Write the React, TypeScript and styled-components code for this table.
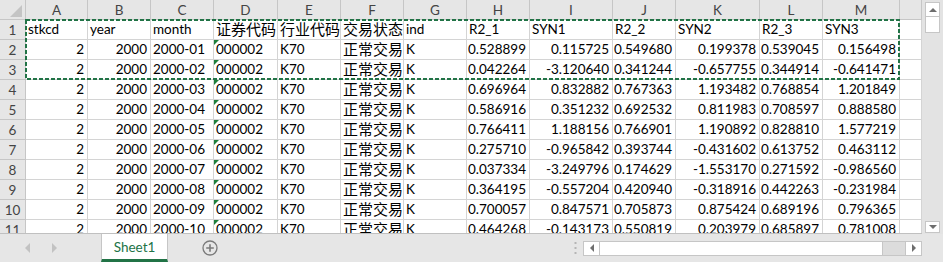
import React from "react";
import styled, { createGlobalStyle } from "styled-components";

const GlobalStyle = createGlobalStyle`
  html, body {
    margin: 0;
    padding: 0;
    background: #ffffff;
  }
  body {
    font-family: Lato, "Noto Sans CJK SC", sans-serif;
  }
`;

const GREEN = "#217346";
const GRID_LINE = "#d4d4d4";
const HEAD_LINE = "#c6c6c6";
const HEAD_BG = "#e6e6e6";

const COLS = [62, 63, 63, 64, 63, 63, 63, 63, 83, 63, 84, 63, 77, 22];
const LETTERS = ["A", "B", "C", "D", "E", "F", "G", "H", "I", "J", "K", "L", "M", ""];
// r = right aligned number, l = left aligned text
const ALIGN = ["r", "r", "l", "l", "l", "l", "l", "r", "r", "r", "r", "r", "r", "l"];

const HEADER = ["stkcd", "year", "month", "证券代码", "行业代码", "交易状态", "ind", "R2_1", "SYN1", "R2_2", "SYN2", "R2_3", "SYN3"];

const VALUES: string[][] = [
  ["0.528899", "0.115725", "0.549680", "0.199378", "0.539045", "0.156498"],
  ["0.042264", "-3.120640", "0.341244", "-0.657755", "0.344914", "-0.641471"],
  ["0.696964", "0.832882", "0.767363", "1.193482", "0.768854", "1.201849"],
  ["0.586916", "0.351232", "0.692532", "0.811983", "0.708597", "0.888580"],
  ["0.766411", "1.188156", "0.766901", "1.190892", "0.828810", "1.577219"],
  ["0.275710", "-0.965842", "0.393744", "-0.431602", "0.613752", "0.463112"],
  ["0.037334", "-3.249796", "0.174629", "-1.553170", "0.271592", "-0.986560"],
  ["0.364195", "-0.557204", "0.420940", "-0.318916", "0.442263", "-0.231984"],
  ["0.700057", "0.847571", "0.705873", "0.875424", "0.689196", "0.796365"],
  ["0.464268", "-0.143173", "0.550819", "0.203979", "0.685897", "0.781008"],
];

const rows: string[][] = [
  [...HEADER, ""],
  ...VALUES.map((v, i) => [
    "2",
    "2000",
    `2000-${String(i + 1).padStart(2, "0")}`,
    "000002",
    "K70",
    "正常交易",
    "K",
    ...v,
    "",
  ]),
];

const hasCjk = (s: string) => /[\u4e00-\u9fff]/.test(s);

const Window = styled.div`
  width: 943px;
  height: 262px;
  display: flex;
  flex-direction: column;
  overflow: hidden;
  background: #ffffff;
`;

const GridArea = styled.div`
  display: flex;
  height: 234px;
  flex-shrink: 0;
`;

const Sheet = styled.div<{ $template: string }>`
  position: relative;
  width: 922px;
  height: 234px;
  overflow: hidden;
  display: grid;
  grid-template-columns: ${(p) => p.$template};
  grid-auto-rows: 20px;
  align-content: start;
  border-bottom: 1px solid #c0c0c0;
  box-sizing: border-box;
`;

const Corner = styled.div`
  background: ${HEAD_BG};
  border-right: 1px solid ${HEAD_LINE};
  border-bottom: 1px solid ${HEAD_LINE};
  box-sizing: border-box;
  display: flex;
  align-items: flex-end;
  justify-content: flex-end;
  padding: 0 3px 2px 0;
`;

const ColHead = styled.div`
  background: ${HEAD_BG};
  border-right: 1px solid ${HEAD_LINE};
  border-bottom: 1px solid ${HEAD_LINE};
  box-sizing: border-box;
  display: flex;
  align-items: center;
  justify-content: center;
  font-size: 13.5px;
  color: #444444;
`;

const RowHead = styled(ColHead)`
  font-size: 13.5px;
`;

const Cell = styled.div<{ $align: string; $cjk: boolean; $flag: boolean }>`
  position: relative;
  border-right: 1px solid ${GRID_LINE};
  border-bottom: 1px solid ${GRID_LINE};
  box-sizing: border-box;
  display: flex;
  align-items: flex-end;
  justify-content: ${(p) => (p.$align === "r" ? "flex-end" : "flex-start")};
  padding: 0 3px 1px 2px;
  white-space: nowrap;
  color: #000000;
  font-family: ${(p) => (p.$cjk ? `"Noto Sans CJK SC", sans-serif` : `Lato, sans-serif`)};
  font-size: ${(p) => (p.$cjk ? "15px" : "13.5px")};
  line-height: ${(p) => (p.$cjk ? "18px" : "17px")};

  &::before {
    content: "";
    display: ${(p) => (p.$flag ? "block" : "none")};
    position: absolute;
    left: 0;
    top: 0;
    width: 0;
    height: 0;
    border-top: 5px solid #1e7f3c;
    border-right: 5px solid transparent;
  }
`;

const Marquee = styled.svg`
  position: absolute;
  left: 25px;
  top: 19px;
  width: 875px;
  height: 61px;
  pointer-events: none;
`;

const VScroll = styled.div`
  width: 21px;
  height: 234px;
  background: #e3e3e3;
  box-sizing: border-box;
  padding: 2px 3px 1px 3px;
  display: flex;
  flex-direction: column;
`;

const ScrollButton = styled.div<{ $h: number }>`
  height: ${(p) => p.$h}px;
  background: #ffffff;
  border: 1px solid #c6c6c6;
  box-sizing: border-box;
  display: flex;
  align-items: center;
  justify-content: center;
`;

const VThumb = styled.div`
  height: 16px;
  background: #ffffff;
  border: 1px solid #c6c6c6;
  border-top: none;
  box-sizing: border-box;
`;

const Spacer = styled.div`
  flex: 1;
`;

const BottomBar = styled.div`
  height: 28px;
  background: #e6e6e6;
  display: flex;
  align-items: stretch;
`;

const NavArea = styled.div`
  width: 101px;
  display: flex;
  align-items: center;
  padding-left: 25px;
  gap: 22px;
  box-sizing: border-box;
`;

const Tab = styled.div`
  width: 67px;
  background: #ffffff;
  border-left: 1px solid #c6c6c6;
  border-right: 1px solid #c6c6c6;
  border-bottom: 3px solid ${GREEN};
  box-sizing: border-box;
  margin-top: -1px;
  display: flex;
  align-items: center;
  justify-content: center;
  padding-top: 1px;
  font-family: Lato, sans-serif;
  font-size: 13.5px;
  color: ${GREEN};
`;

const AddArea = styled.div`
  margin-left: 34px;
  display: flex;
  align-items: center;
`;

const Dots = styled.div`
  margin-left: auto;
  width: 16px;
  display: flex;
  align-items: center;
  justify-content: center;
`;

const HScroll = styled.div`
  width: 339px;
  display: flex;
  align-items: center;
  margin-left: 0;
`;

const HTrack = styled.div`
  flex: 1;
  height: 15px;
  display: flex;
  background: #dcdcdc;
  border: 1px solid #c6c6c6;
  box-sizing: border-box;
`;

const HButton = styled.div`
  width: 15px;
  height: 100%;
  background: #ffffff;
  box-sizing: border-box;
  display: flex;
  align-items: center;
  justify-content: center;
`;

const HThumb = styled.div`
  width: 284px;
  height: 100%;
  background: #ffffff;
  border-left: 1px solid #c6c6c6;
  border-right: 1px solid #c6c6c6;
  box-sizing: border-box;
`;

const HGap = styled.div`
  flex: 1;
  border-right: 1px solid #c6c6c6;
`;

const CornerBox = styled.div`
  width: 21px;
`;

const Arrow = ({ dir, color = "#6e6e6e", size = 4 }: { dir: "up" | "down" | "left" | "right"; color?: string; size?: number }) => {
  const s = size;
  const pts = {
    up: `0,${s} ${s},0 ${2 * s},${s}`,
    down: `0,0 ${2 * s},0 ${s},${s}`,
    left: `${s},0 ${s},${2 * s} 0,${s}`,
    right: `0,0 0,${2 * s} ${s},${s}`,
  }[dir];
  const w = dir === "up" || dir === "down" ? 2 * s : s;
  const h = dir === "up" || dir === "down" ? s : 2 * s;
  return (
    <svg width={w} height={h} viewBox={`0 0 ${w} ${h}`}>
      <polygon points={pts} fill={color} />
    </svg>
  );
};

export default function App() {
  const template = `26px ${COLS.map((w) => `${w}px`).join(" ")}`;

  return (
    <>
      <GlobalStyle />
      <Window>
        <GridArea>
          <Sheet $template={template}>
            <Corner>
              <svg width="12" height="12" viewBox="0 0 12 12">
                <polygon points="12,0 12,12 0,12" fill="#c4c4c4" />
              </svg>
            </Corner>
            {LETTERS.map((l, i) => (
              <ColHead key={`h${i}`}>{l}</ColHead>
            ))}
            {rows.map((r, ri) => (
              <React.Fragment key={ri}>
                <RowHead>{ri + 1}</RowHead>
                {r.map((v, ci) => (
                  <Cell
                    key={ci}
                    $align={ri === 0 ? "l" : ALIGN[ci]}
                    $cjk={hasCjk(v)}
                    $flag={ri > 0 && ci === 3}
                  >
                    {v}
                  </Cell>
                ))}
              </React.Fragment>
            ))}
            <Marquee viewBox="0 0 875 61">
              <rect x="1" y="1" width="873" height="59" fill="none" stroke={GREEN} strokeWidth="2" strokeDasharray="4 2" />
            </Marquee>
          </Sheet>
          <VScroll>
            <ScrollButton $h={15}>
              <Arrow dir="up" />
            </ScrollButton>
            <VThumb />
            <Spacer />
            <ScrollButton $h={12}>
              <Arrow dir="down" />
            </ScrollButton>
          </VScroll>
        </GridArea>
        <BottomBar>
          <NavArea>
            <Arrow dir="left" color="#c2c2c2" size={5} />
            <Arrow dir="right" color="#c2c2c2" size={5} />
          </NavArea>
          <Tab>Sheet1</Tab>
          <AddArea>
            <svg width="16" height="16" viewBox="0 0 16 16">
              <circle cx="8" cy="8" r="7" fill="none" stroke="#7a7a7a" strokeWidth="1.3" />
              <path d="M8 4.2v7.6M4.2 8h7.6" stroke="#7a7a7a" strokeWidth="1.6" />
            </svg>
          </AddArea>
          <Dots>
            <svg width="3" height="14" viewBox="0 0 3 14">
              <rect x="0.5" y="1" width="2" height="2" fill="#b5b5b5" />
              <rect x="0.5" y="6" width="2" height="2" fill="#b5b5b5" />
              <rect x="0.5" y="11" width="2" height="2" fill="#b5b5b5" />
            </svg>
          </Dots>
          <HScroll>
            <HTrack>
              <HButton>
                <Arrow dir="left" />
              </HButton>
              <HThumb />
              <HGap />
              <HButton>
                <Arrow dir="right" />
              </HButton>
            </HTrack>
          </HScroll>
          <CornerBox />
        </BottomBar>
      </Window>
    </>
  );
}
